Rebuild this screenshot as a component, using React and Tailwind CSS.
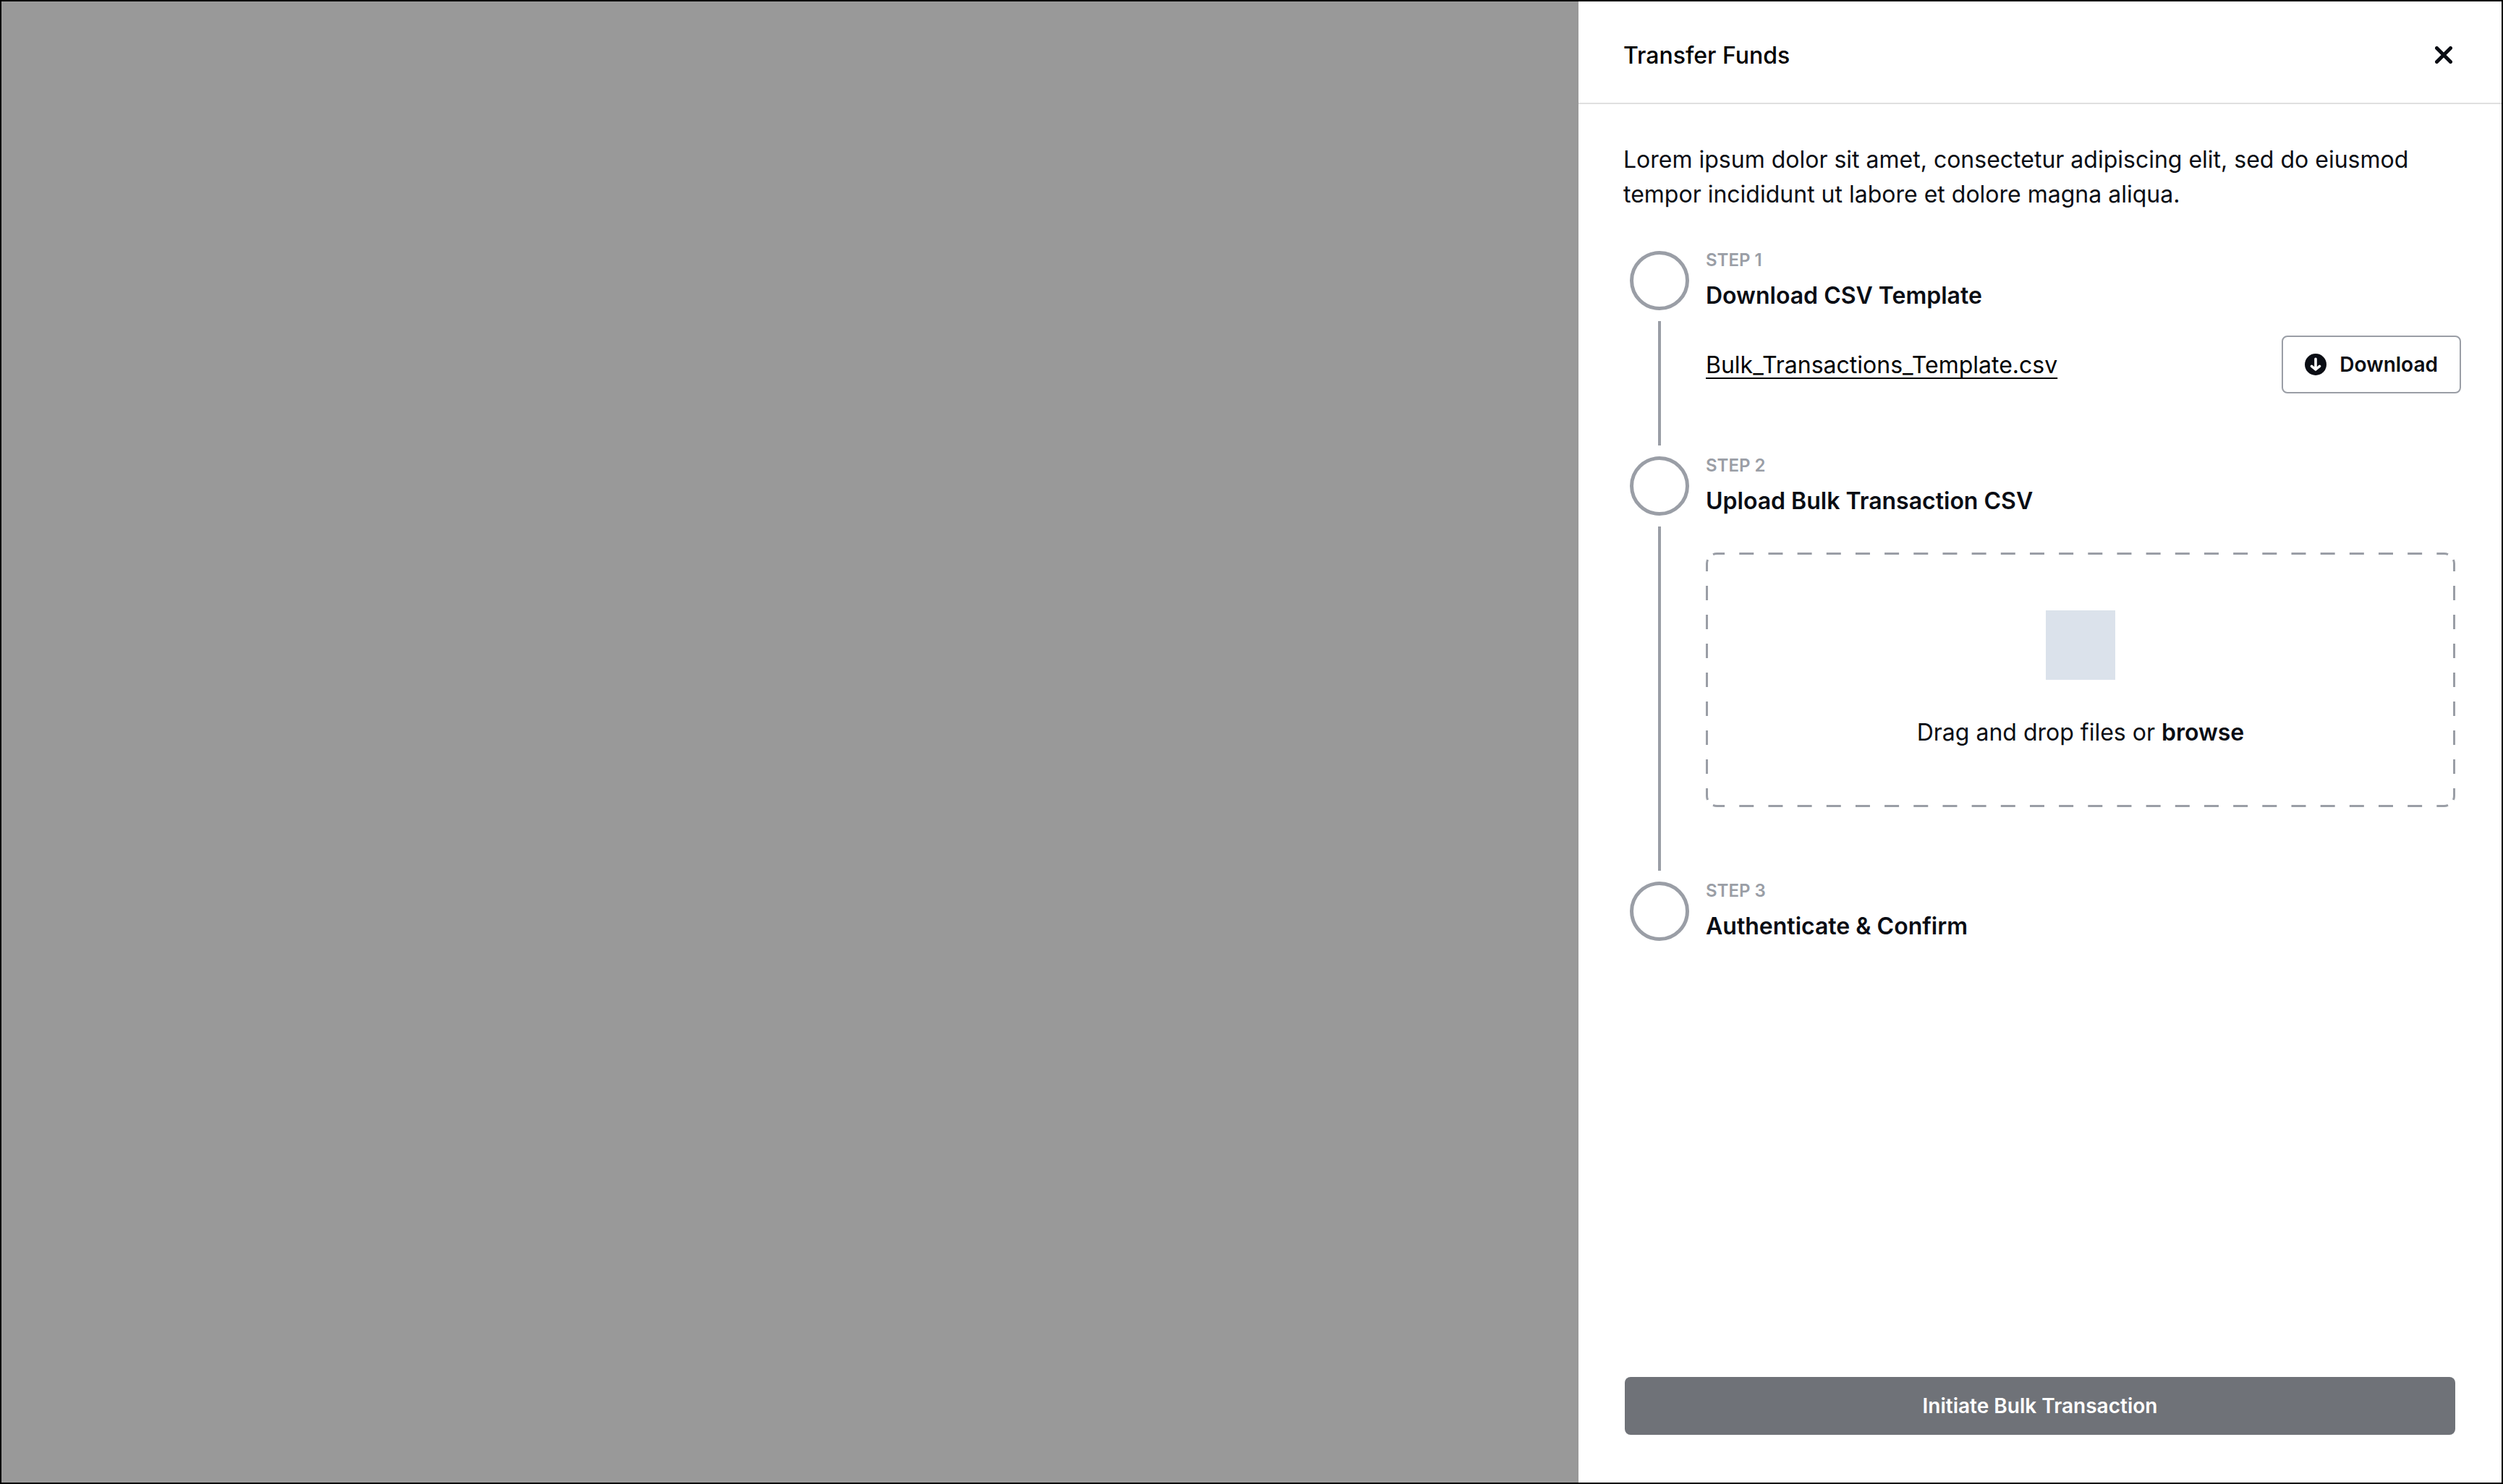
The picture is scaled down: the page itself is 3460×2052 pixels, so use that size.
const TEXT = "text-[32px] leading-[48px]";

function CloseIcon() {
  return (
    <svg viewBox="0 0 24 24" className="size-6" fill="none" stroke="currentColor" strokeWidth="5" strokeLinecap="round" aria-hidden="true">
      <path d="M2.5 2.5 21.5 21.5M21.5 2.5 2.5 21.5" />
    </svg>
  );
}

function DownloadIcon() {
  return (
    <svg viewBox="0 0 30 30" className="size-[30px]" aria-hidden="true">
      <circle cx="15" cy="15" r="15" fill="currentColor" />
      <path d="M15 7.3V21M9.5 17.3 15 22 20.5 17.3" fill="none" stroke="#fff" strokeWidth="3.6" strokeLinecap="round" strokeLinejoin="round" />
    </svg>
  );
}

function DashedOutline() {
  return (
    <svg
      viewBox="0 0 1036 352"
      preserveAspectRatio="none"
      className="pointer-events-none absolute inset-0 size-full"
      fill="none"
      stroke="#9a9ea6"
      strokeWidth="3"
      strokeDashoffset="3.8"
      aria-hidden="true"
    >
      <g strokeDasharray="20 20.17">
        <path d="M10 2.6A14 14 0 0 1 15.5 1.5H1020.5A14 14 0 0 1 1026 2.6" />
        <path d="M10 349.4A14 14 0 0 0 15.5 350.5H1020.5A14 14 0 0 0 1026 349.4" />
      </g>
      <g strokeDasharray="20 20">
        <path d="M2.6 10A14 14 0 0 0 1.5 15.5V336.5A14 14 0 0 0 2.6 342" />
        <path d="M1033.4 10A14 14 0 0 1 1034.5 15.5V336.5A14 14 0 0 1 1033.4 342" />
      </g>
    </svg>
  );
}

function Step({ number, title, last, children }) {
  return (
    <li className="flex gap-[23px]">
      <div className="flex w-[82px] shrink-0 flex-col items-center pt-[3px]">
        <span className="size-[82px] rounded-full border-5 border-[#9a9ea6]" />
        {!last && <span className="mt-[15px] mb-3 w-1 flex-1 bg-[#9a9ea6]" />}
      </div>
      <div className="min-w-0 flex-1">
        <p className="text-2xl leading-8 font-semibold text-[#9a9ea6]">STEP {number}</p>
        <h3 className={`${TEXT} mt-[9px] font-semibold`}>{title}</h3>
        {children}
      </div>
    </li>
  );
}

export default function App() {
  return (
    <div className="flex min-h-screen justify-end border-2 border-black bg-[#999999] font-['Inter',sans-serif] text-[#0a0d14]">
      <aside className="flex w-[1276px] max-w-full flex-col bg-white">
        <header className="flex items-center justify-between border-b-2 border-[#e0e0e0] pt-[51px] pr-[68px] pb-[41px] pl-[62px]">
          <h2 className={`${TEXT} font-medium text-black`}>Transfer Funds</h2>
          <button type="button" aria-label="Close" className="pb-0.5">
            <CloseIcon />
          </button>
        </header>

        <main className="flex-1 pt-[53px] pr-16 pl-[62px]">
          <p className={TEXT}>
            Lorem ipsum dolor sit amet, consectetur adipiscing elit, sed do eiusmod tempor incididunt ut labore et dolore
            magna aliqua.
          </p>

          <ol className="mt-[51px] pl-[9px]">
            <Step number={1} title="Download CSV Template">
              <div className="-mr-2 mt-[31px] mb-[84px] flex items-center justify-between">
                <a href="#template" className={`${TEXT} pt-0.5 text-black underline decoration-2 underline-offset-[6px] [text-decoration-skip-ink:none]`}>
                  Bulk_Transactions_Template.csv
                </a>
                <button type="button" className="flex h-20 items-center gap-[18px] rounded-lg border-2 border-[#9a9ea6] px-[30px] text-[28px] leading-10 font-semibold">
                  <DownloadIcon />
                  Download
                </button>
              </div>
            </Step>

            <Step number={2} title="Upload Bulk Transaction CSV">
              <label className="relative mt-[47px] mb-[100px] flex cursor-pointer flex-col items-center gap-[49px] pt-20 pb-[79px]">
                <DashedOutline />
                <input type="file" accept=".csv" className="sr-only" />
                <span className="size-24 bg-[#dbe2eb]" />
                <span className={TEXT}>
                  Drag and drop files or <strong className="font-semibold">browse</strong>
                </span>
              </label>
            </Step>

            <Step number={3} title="Authenticate &amp; Confirm" last />
          </ol>
        </main>

        <footer className="px-16 pb-[66px]">
          <button type="button" className="h-20 w-full rounded-lg bg-[#6f7278] text-[28px] leading-10 font-semibold text-white">
            Initiate Bulk Transaction
          </button>
        </footer>
      </aside>
    </div>
  );
}
